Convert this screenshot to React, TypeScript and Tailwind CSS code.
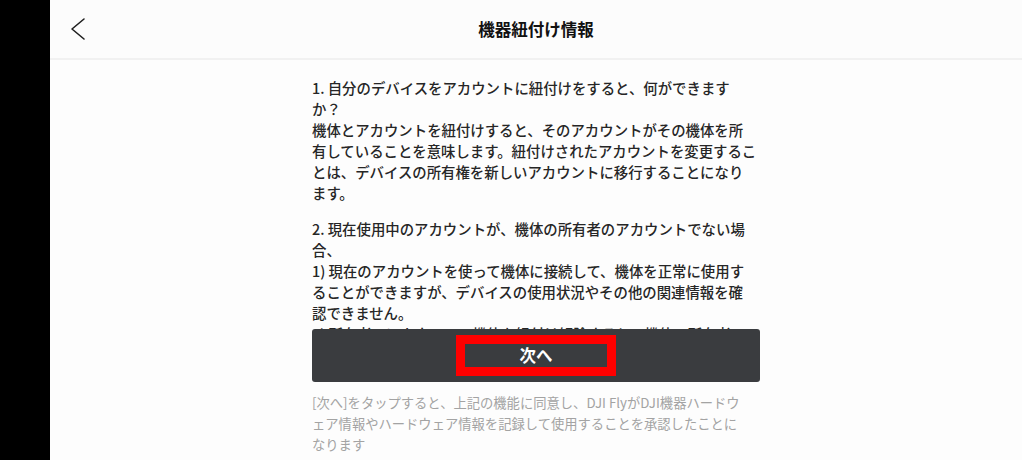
import React from "react";

const para1 = [
  "1. 自分のデバイスをアカウントに紐付けをすると、何ができます",
  "か？",
  "機体とアカウントを紐付けすると、そのアカウントがその機体を所",
  "有していることを意味します。紐付けされたアカウントを変更するこ",
  "とは、デバイスの所有権を新しいアカウントに移行することになり",
  "ます。",
];

const para2 = [
  "2. 現在使用中のアカウントが、機体の所有者のアカウントでない場",
  "合、",
  "1) 現在のアカウントを使って機体に接続して、機体を正常に使用す",
  "ることができますが、デバイスの使用状況やその他の関連情報を確",
  "認できません。",
  "2) 所有者のアカウントで機体を紐付け解除すると、機体の所有者",
];

const footer = [
  "[次へ]をタップすると、上記の機能に同意し、DJI FlyがDJI機器ハードウ",
  "ェア情報やハードウェア情報を記録して使用することを承認したことに",
  "なります",
];

export default function App() {
  return (
    <div
      className="flex w-[1022px] h-[460px] overflow-hidden"
      style={{ fontFamily: '"Noto Sans CJK JP", "Noto Sans", sans-serif' }}
    >
      <div className="w-[50px] h-full bg-black shrink-0" />
      <div className="flex-1 flex flex-col bg-[#fdfdfd]">
        <div className="h-[60px] shrink-0 grid grid-cols-[1fr_auto_1fr] items-center border-b-2 border-[#f1f1f1] bg-[#fcfcfc]">
          <div className="pl-[20px] flex items-center">
            <svg width="16" height="24" viewBox="0 0 16 24" fill="none">
              <polyline
                points="14,2 2,12 14,22"
                stroke="#1f1f1f"
                strokeWidth="1.6"
                strokeLinecap="round"
                strokeLinejoin="round"
              />
            </svg>
          </div>
          <div className="text-[16.5px] font-bold text-[#111] leading-none">
            機器紐付け情報
          </div>
          <div />
        </div>
        <div className="w-[448px] mx-auto flex flex-col">
          <div className="h-[269px] overflow-hidden pt-[17px] text-[14.4px] leading-[21px] font-medium text-[#262626]">
            {para1.map((l, i) => (
              <div key={i} className="whitespace-nowrap">
                {l}
              </div>
            ))}
            <div className="h-[15px]" />
            {para2.map((l, i) => (
              <div key={i} className="whitespace-nowrap">
                {l}
              </div>
            ))}
          </div>
          <div className="h-[53px] rounded-[3px] bg-[#3a3c3f] flex items-center justify-center">
            <div className="w-[160px] h-[41px] border-[9px] border-[#ff0000] flex items-center justify-center">
              <span className="text-[16.5px] font-bold text-white leading-none">次へ</span>
            </div>
          </div>
          <div className="mt-[10px] text-[13.3px] leading-[21px] text-[#a3a3a3]">
            {footer.map((l, i) => (
              <div key={i} className="whitespace-nowrap">
                {l}
              </div>
            ))}
          </div>
        </div>
      </div>
    </div>
  );
}
